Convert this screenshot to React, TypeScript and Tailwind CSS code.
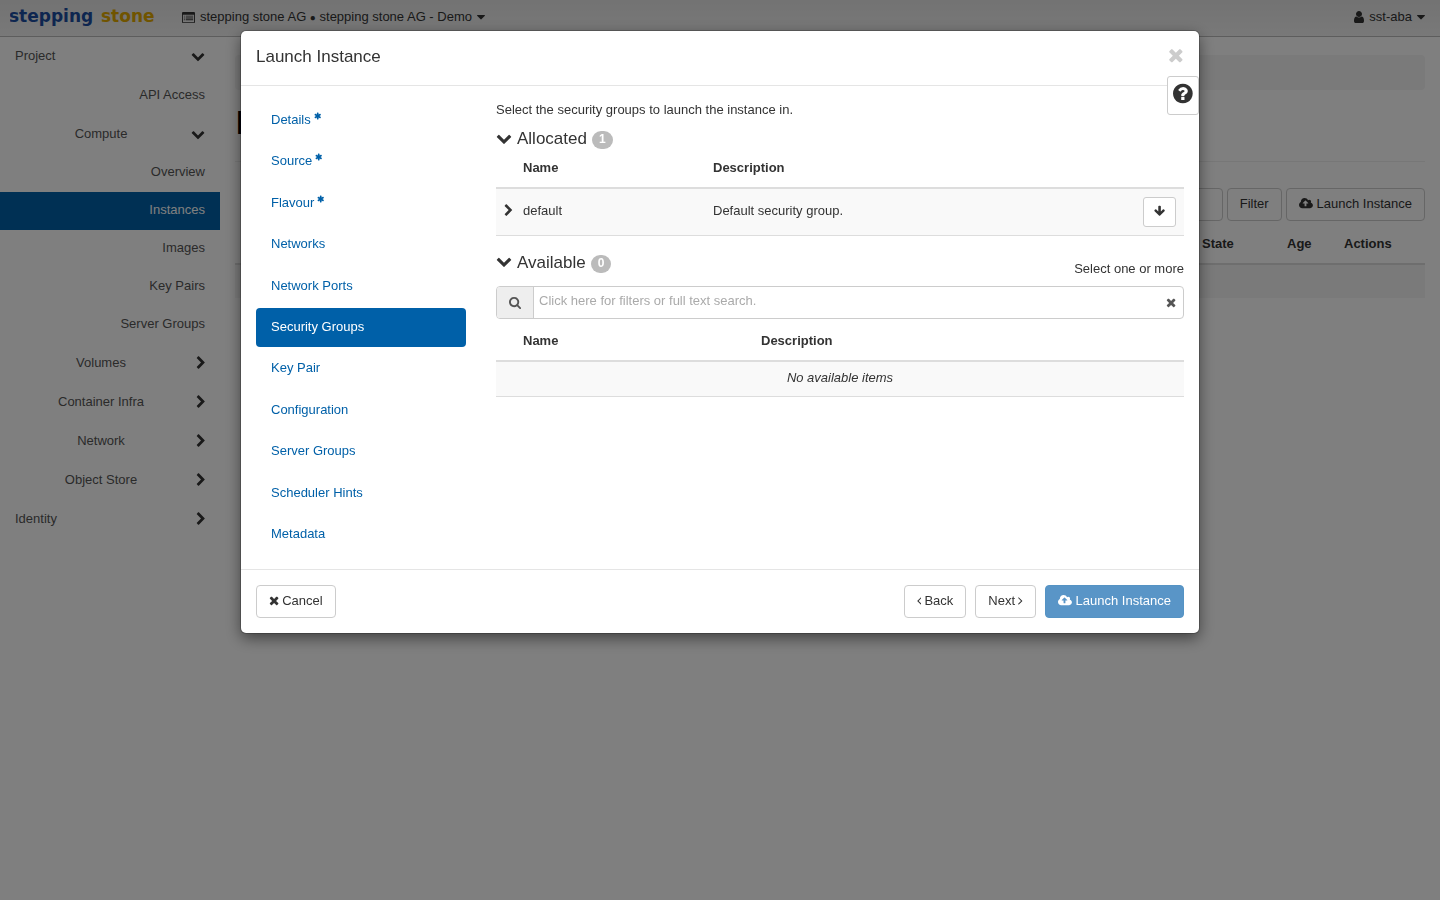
import React from 'react';

const icons = {
  chevronDown: {
    box: '0 0 1792 1792',
    d: 'M1683 808l-742 741q-19 19-45 19t-45-19l-742-741q-19-19-19-45.5t19-45.5l166-165q19-19 45-19t45 19l531 531 531-531q19-19 45-19t45 19l166 165q19 19 19 45.5t-19 45.5z'
  },
  chevronRight: {
    box: '256 0 1216 1792',
    d: 'M1363 877l-742 742q-19 19-45 19t-45-19l-166-166q-19-19-19-45t19-45l531-531-531-531q-19-19-19-45t19-45l166-166q19-19 45-19t45 19l742 742q19 19 19 45t-19 45z'
  },
  times: {
    box: '192 0 1408 1792',
    d: 'M1490 1322q0 40-28 68l-136 136q-28 28-68 28t-68-28l-294-294-294 294q-28 28-68 28t-68-28l-136-136q-28-28-28-68t28-68l294-294-294-294q-28-28-28-68t28-68l136-136q28-28 68-28t68 28l294 294 294-294q28-28 68-28t68 28l136 136q28 28 28 68t-28 68l-294 294 294 294q28 28 28 68z'
  },
  question: {
    box: '128 0 1536 1792',
    d: 'M1024 1376v-192q0-14-9-23t-23-9h-192q-14 0-23 9t-9 23v192q0 14 9 23t23 9h192q14 0 23-9t9-23zm256-672q0-88-55.5-163t-138.5-116-170-41q-243 0-371 213-15 24 8 42l132 100q7 6 19 6 16 0 25-12 53-68 86-92 34-24 86-24 48 0 85.5 26t37.5 59q0 38-20 61t-68 45q-63 28-115.5 86.5t-52.5 125.5v36q0 14 9 23t23 9h192q14 0 23-9t9-23q0-19 21.5-49.5t54.5-49.5q32-18 49-28.5t46-35 44.5-48 28-60.5 12.5-81zm384 192q0 209-103 385.5t-279.5 279.5-385.5 103-385.5-103-279.5-279.5-103-385.5 103-385.5 279.5-279.5 385.5-103 385.5 103 279.5 279.5 103 385.5z'
  },
  caretDown: {
    box: '384 0 1024 1792',
    d: 'M1408 704q0 26-19 45l-448 448q-19 19-45 19t-45-19l-448-448q-19-19-19-45t19-45 45-19h896q26 0 45 19t19 45z'
  },
  user: {
    box: '256 0 1280 1792',
    d: 'M1536 1399q0 109-62.5 187t-150.5 78h-854q-88 0-150.5-78t-62.5-187q0-85 8.5-160.5t31.5-152 58.5-131 94-89 134.5-34.5q131 128 313 128t313-128q76 0 134.5 34.5t94 89 58.5 131 31.5 152 8.5 160.5zm-256-887q0 159-112.5 271.5t-271.5 112.5-271.5-112.5-112.5-271.5 112.5-271.5 271.5-112.5 271.5 112.5 112.5 271.5z'
  },
  search: {
    box: '64 0 1664 1792',
    d: 'M1216 832q0-185-131.5-316.5t-316.5-131.5-316.5 131.5-131.5 316.5 131.5 316.5 316.5 131.5 316.5-131.5 131.5-316.5zm512 832q0 52-38 90t-90 38q-54 0-90-38l-343-342q-179 124-399 124-143 0-273.5-55.5t-225-150-150-225-55.5-273.5 55.5-273.5 150-225 225-150 273.5-55.5 273.5 55.5 225 150 150 225 55.5 273.5q0 220-124 399l343 343q37 37 37 90z'
  },
  arrowDown: {
    box: '64 0 1664 1792',
    d: 'M1675 832q0 53-37 90l-651 652q-39 37-91 37-53 0-90-37l-651-652q-38-36-38-90 0-53 38-91l74-75q39-37 91-37 53 0 90 37l294 294v-704q0-52 38-90t90-38h128q52 0 90 38t38 90v704l294-294q37-37 90-37 52 0 91 37l75 75q37 39 37 91z'
  },
  cloudUpload: {
    box: '-64 0 1920 1792',
    d: 'M1216 864q0-14-9-23l-352-352q-9-9-23-9t-23 9l-351 351q-10 12-10 24 0 14 9 23t23 9h224v352q0 13 9.5 22.5t22.5 9.5h192q13 0 22.5-9.5t9.5-22.5v-352h224q13 0 22.5-9.5t9.5-22.5zm640 288q0 159-112.5 271.5t-271.5 112.5h-1088q-185 0-316.5-131.5t-131.5-316.5q0-130 70-240t188-165q-2-30-2-43 0-212 150-362t362-150q156 0 285.5 87t188.5 231q71-62 166-62 106 0 181 75t75 181q0 76-41 138 130 31 213.5 135.5t83.5 238.5z'
  },
  listAlt: {
    box: '0 0 1792 1792',
    d: 'M160 128h1472q66 0 113 47t47 113v1216q0 66-47 113t-113 47h-1472q-66 0-113-47t-47-113v-1216q0-66 47-113t113-47zM128 512v992q0 32 32 32h1472q32 0 32-32v-992zM256 640h128v128h-128zM512 640h1024v128h-1024zM256 896h128v128h-128zM512 896h1024v128h-1024zM256 1152h128v128h-128zM512 1152h1024v128h-1024z'
  },
  asterisk: {
    box: '64 0 1664 1792',
    d: 'M1546 1050q46 26 59.5 77.5t-12.5 97.5l-64 110q-26 46-77.5 59.5t-97.5-12.5l-266-153v307q0 52-38 90t-90 38h-128q-52 0-90-38t-38-90v-307l-266 153q-46 26-97.5 12.5t-77.5-59.5l-64-110q-26-46-12.5-97.5t59.5-77.5l266-154-266-154q-46-26-59.5-77.5t12.5-97.5l64-110q26-46 77.5-59.5t97.5 12.5l266 153v-307q0-52 38-90t90-38h128q52 0 90 38t38 90v307l266-153q46-26 97.5-12.5t77.5 59.5l64 110q26 46 12.5 97.5t-59.5 77.5l-266 154z'
  },
  angleLeft: {
    box: '576 0 640 1792',
    d: 'M1203 544q0 13-10 23l-393 393 393 393q10 10 10 23t-10 23l-50 50q-10 10-23 10t-23-10l-466-466q-10-10-10-23t10-23l466-466q10-10 23-10t23 10l50 50q10 10 10 23z'
  },
  angleRight: {
    box: '576 0 640 1792',
    d: 'M1171 960q0 13-10 23l-466 466q-10 10-23 10t-23-10l-50-50q-10-10-10-23t10-23l393-393-393-393q-10-10-10-23t10-23l50-50q10-10 23-10t23 10l466 466q10 10 10 23z'
  }
};

interface IconProps {
  name: keyof typeof icons;
  className?: string;
}
const Icon: React.FC<IconProps> = ({
  name,
  className = 'h-[13px]'
}) => {
  return <svg viewBox={icons[name].box} className={`inline-block w-auto shrink-0 ${className}`} fill="currentColor" fillRule="evenodd" aria-hidden="true">
      <path d={icons[name].d} />
    </svg>;
};

interface ButtonProps {
  children: React.ReactNode;
  className?: string;
}
const Button: React.FC<ButtonProps> = ({
  children,
  className = 'gap-[3px] border-[#ccc] bg-white text-[#333]'
}) => {
  return <button type="button" className={`flex h-[33px] items-center rounded border px-3 pb-0.5 whitespace-nowrap ${className}`}>
      {children}
    </button>;
};

const sidebarLeaves = ['Overview', 'Instances', 'Images', 'Key Pairs', 'Server Groups'];
const sidebarGroups = ['Volumes', 'Container Infra', 'Network', 'Object Store'];

interface GroupProps {
  label: string;
  open?: boolean;
  top?: boolean;
}
const SidebarGroup: React.FC<GroupProps> = ({
  label,
  open = false,
  top = false
}) => {
  return <button type="button" className="flex h-[39px] w-full items-center px-[15px]">
      <span className={`flex-1 pb-0.5 ${top ? 'text-left' : 'text-center'}`}>{label}</span>
      <span className="flex w-[18px] justify-end pb-0.5">
        <Icon name={open ? 'chevronDown' : 'chevronRight'} className={open ? 'h-[14px] text-[#333]' : 'mt-px h-[14px] text-[#333]'} />
      </span>
    </button>;
};

const Sidebar = () => {
  return <nav className="w-[220px] shrink-0 text-[#555]">
      <SidebarGroup label="Project" open top />
      <a href="#api" className="flex h-[39px] items-center justify-end pr-[15px] pb-0.5">API Access</a>
      <SidebarGroup label="Compute" open />
      {sidebarLeaves.map(item => <a key={item} href="#panel" className={`flex h-[38px] items-center justify-end pr-[15px] pb-0.5 ${item === 'Instances' ? 'bg-[#0060a8] text-white' : ''}`}>
          {item}
        </a>)}
      {sidebarGroups.map(item => <SidebarGroup key={item} label={item} />)}
      <SidebarGroup label="Identity" top />
    </nav>;
};

const TopBar = () => {
  return <header className="flex h-[37px] items-center border-b border-[#bbb] bg-linear-to-b from-[#e6e6e6] to-[#f2f2f2] pr-[15px] pb-0.5 pl-2.5 text-[#333]">
      <a href="#home" className="w-[147px]" aria-label="stepping stone">
        <svg viewBox="0 0 147 24" className="h-6 w-[147px]" aria-hidden="true">
          <text x="-1" y="17" fontFamily="DejaVu Sans" fontWeight="bold" fontSize="17" fill="#1c4da1">stepping</text>
          <text x="91" y="17" fontFamily="DejaVu Sans" fontWeight="bold" fontSize="17" fill="#e0a800">stone</text>
        </svg>
      </a>
      <button type="button" className="ml-[25px] flex items-center gap-[5px]">
        <Icon name="listAlt" />
        <span>stepping stone AG <span className="text-[10px]">●</span> stepping stone AG - Demo</span>
        <Icon name="caretDown" className="h-[14px]" />
      </button>
      <button type="button" className="ml-auto flex items-center gap-[5px]">
        <Icon name="user" className="h-[14px]" />
        <span>sst-aba</span>
        <Icon name="caretDown" className="h-[14px]" />
      </button>
    </header>;
};

const InstancesPage = () => {
  return <main className="min-w-0 flex-1 px-[15px] pt-[18px]">
      <div className="h-[35px] rounded bg-[#f5f5f5]" />
      <h1 className="flex h-[72px] items-start border-b border-[#eee] pt-3 text-[34px] leading-10 text-black">Instances</h1>
      <div className="mt-[26px] flex justify-end gap-1">
        <input type="text" aria-label="Filter instances" className="h-[33px] w-40 rounded border border-[#ccc] bg-white px-3" />
        <Button>Filter</Button>
        <Button className="gap-1 border-[#ccc] bg-white text-[#333]"><Icon name="cloudUpload" />Launch Instance</Button>
      </div>
      <table className="mt-1 w-full table-fixed text-left text-[#333]">
        <thead>
          <tr className="h-[39px] border-b-2 border-[#ddd]">
            <th />
            <th className="w-[85px] px-2">State</th>
            <th className="w-[57px] px-2">Age</th>
            <th className="w-[89px] px-2">Actions</th>
          </tr>
        </thead>
        <tbody>
          <tr className="h-[34px] bg-[#f5f5f5]">
            <td colSpan={4} />
          </tr>
        </tbody>
      </table>
    </main>;
};

const steps = [{
  label: 'Details',
  required: true
}, {
  label: 'Source',
  required: true
}, {
  label: 'Flavour',
  required: true
}, {
  label: 'Networks'
}, {
  label: 'Network Ports'
}, {
  label: 'Security Groups',
  active: true
}, {
  label: 'Key Pair'
}, {
  label: 'Configuration'
}, {
  label: 'Server Groups'
}, {
  label: 'Scheduler Hints'
}, {
  label: 'Metadata'
}];

const StepNav = () => {
  return <nav className="flex w-[210px] shrink-0 flex-col justify-between">
      {steps.map(step => <a key={step.label} href="#step" className={`flex h-[39px] items-center gap-[3px] rounded px-[15px] pb-px ${step.active ? 'bg-[#0060a8] text-white' : 'text-[#0060a8]'}`}>
          {step.label}
          {step.required && <Icon name="asterisk" className="mb-2 h-2" />}
        </a>)}
    </nav>;
};

interface SectionTitleProps {
  label: string;
  count: number;
}
const SectionTitle: React.FC<SectionTitleProps> = ({
  label,
  count
}) => {
  return <h2 className="flex h-7 items-center gap-[5px] text-[17px]">
      <Icon name="chevronDown" className="mb-[3px] h-4" />
      {label}
      <span className="mt-0.5 flex h-[18px] min-w-5 items-center justify-center rounded-full bg-[#bbb] px-[7px] pb-0.5 text-xs font-bold text-white">{count}</span>
    </h2>;
};

const SecurityGroups = () => {
  return <section className="min-w-0 flex-1">
      <p className="h-6 leading-[18px]">Select the security groups to launch the instance in.</p>
      <SectionTitle label="Allocated" count={1} />
      <table className="w-full table-fixed text-left">
        <thead>
          <tr className="h-[35px] border-b-2 border-[#ddd]">
            <th className="w-[27px]" />
            <th className="w-[190px] pb-1">Name</th>
            <th className="pb-1">Description</th>
            <th className="w-[41px]" />
          </tr>
        </thead>
        <tbody>
          <tr className="h-[47px] border-b border-[#ddd] bg-[#f9f9f9]">
            <td className="pb-0.5 pl-2">
              <button type="button" aria-label="Expand default" className="flex"><Icon name="chevronRight" /></button>
            </td>
            <td className="pb-0.5">default</td>
            <td className="pb-0.5">Default security group.</td>
            <td>
              <button type="button" aria-label="Remove default" className="flex h-[30px] w-[33px] items-center justify-center rounded-[3px] border border-[#ccc] bg-white pb-0.5">
                <Icon name="arrowDown" className="h-3" />
              </button>
            </td>
          </tr>
        </tbody>
      </table>
      <div className="mt-[13px] flex h-[37px] items-start justify-between">
        <SectionTitle label="Available" count={0} />
        <span className="pt-[11px] leading-[18px]">Select one or more</span>
      </div>
      <div className="flex h-[33px] rounded border border-[#ccc] text-[#555]">
        <label htmlFor="group-search" className="flex w-[37px] items-center justify-center rounded-l-[3px] border-r border-[#ccc] bg-[#eee]">
          <Icon name="search" />
        </label>
        <input id="group-search" type="text" placeholder="Click here for filters or full text search." className="min-w-0 flex-1 px-[5px] pb-[3px] placeholder:text-[#aaa] outline-none" />
        <button type="button" aria-label="Clear search" className="px-[7px]">
          <Icon name="times" />
        </button>
      </div>
      <table className="mt-1.5 w-full table-fixed text-left">
        <thead>
          <tr className="h-[36px] border-b-2 border-[#ddd]">
            <th className="w-[27px]" />
            <th className="w-[238px] pb-0.5">Name</th>
            <th className="pb-0.5">Description</th>
          </tr>
        </thead>
        <tbody>
          <tr className="h-[36px] border-b border-[#ddd] bg-[#f9f9f9]">
            <td colSpan={3} className="pb-0.5 text-center italic">No available items</td>
          </tr>
        </tbody>
      </table>
    </section>;
};

const LaunchDialog = () => {
  return <div className="fixed inset-0 flex items-start justify-center overflow-auto bg-black/50 px-4 pt-[31px]">
      <div role="dialog" aria-label="Launch Instance" className="relative w-full max-w-[958px] rounded-[5px] bg-white text-[#333] shadow-[0_0_0_1px_rgba(0,0,0,0.2),0_5px_15px_rgba(0,0,0,0.5)]">
        <div className="flex h-[55px] items-center justify-between border-b border-[#e5e5e5] px-[15px] pb-0.5">
          <h1 className="text-[17px]">Launch Instance</h1>
          <button type="button" aria-label="Close" className="pb-1 text-[#ccc]"><Icon name="times" className="h-5" /></button>
        </div>
        <button type="button" aria-label="Help" className="absolute top-[45px] right-0 flex h-[39px] w-8 items-center justify-center rounded-[3px] border border-[#ccc] bg-white pb-1">
          <Icon name="question" className="h-[23px]" />
        </button>
        <div className="flex min-h-[483px] gap-[30px] p-[15px]">
          <StepNav />
          <SecurityGroups />
        </div>
        <div className="flex gap-[9px] border-t border-[#e5e5e5] p-[15px]">
          <div className="flex-1">
            <Button><Icon name="times" />Cancel</Button>
          </div>
          <Button><Icon name="angleLeft" />Back</Button>
          <Button>Next<Icon name="angleRight" /></Button>
          <Button className="gap-1 border-[#5593c4] bg-[#5995c7] text-white"><Icon name="cloudUpload" />Launch Instance</Button>
        </div>
      </div>
    </div>;
};

const App = () => {
  return <div className="min-h-screen bg-white font-['Liberation_Sans',Arial,sans-serif] text-[13px] leading-[18px]">
      <TopBar />
      <div className="flex">
        <Sidebar />
        <InstancesPage />
      </div>
      <LaunchDialog />
    </div>;
};
export default App;
